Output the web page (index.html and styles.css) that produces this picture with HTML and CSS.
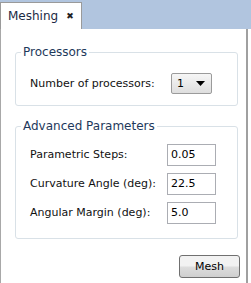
FILE: index.html
```html
<!DOCTYPE html>
<html>
<head>
	<title>Meshing</title>
	<link rel="stylesheet" href="styles.css">
</head>
<body>
	<div class="tabbar">
		<div class="tab">
			<span class="tab-title">Meshing</span>
			<span class="tab-close">&#x2716;</span>
		</div>
	</div>
	<div class="panel">
		<fieldset class="group">
			<legend>Processors</legend>
			<div class="row">
				<label>Number of processors:</label>
				<div class="combo">
					<span>1</span>
					<svg width="9" height="5" viewBox="0 0 9 5"><path d="M0 0h9L4.5 5z" fill="#000"/></svg>
				</div>
			</div>
		</fieldset>
		<fieldset class="group adv">
			<legend>Advanced Parameters</legend>
			<div class="row">
				<label>Parametric Steps:</label>
				<input class="field" type="text" value="0.05">
			</div>
			<div class="row">
				<label>Curvature Angle (deg):</label>
				<input class="field" type="text" value="22.5">
			</div>
			<div class="row">
				<label>Angular Margin (deg):</label>
				<input class="field" type="text" value="5.0">
			</div>
		</fieldset>
		<div class="actions">
			<button class="btn">Mesh</button>
		</div>
	</div>
</body>
</html>
```

FILE: styles.css
```css
body {
	margin: 0;
	background: #fff;
	font-family: "DejaVu Sans", sans-serif;
	font-size: 11px;
	color: #000;
}

.tabbar {
	display: flex;
	align-items: flex-end;
	height: 29px;
	background: #b1c5df;
}

.tab {
	display: flex;
	align-items: center;
	box-sizing: border-box;
	width: 82px;
	height: 27px;
	padding: 0 0 0 7px;
	background: #fff;
	border: 1px solid #9a9a9a;
	border-bottom: none;
	color: #1b2a44;
	font-size: 12px;
}

.tab-close {
	margin-left: 8px;
	font-size: 9px;
	font-weight: 700;
	color: #222;
}

.panel {
	box-sizing: border-box;
	width: 248px;
	height: 254px;
	border-left: 1px solid #a8a8a8;
	border-right: 2px solid #a0a0a0;
	padding: 16px 8px 0 14px;
}

.group {
	margin: 0;
	padding: 10px 0 7px 14px;
	border: 1px solid #d9e1e7;
	border-radius: 3px;
}

.group legend {
	padding: 0 2px;
	margin-left: -9px;
	font-size: 12px;
	color: #1e395b;
}

.adv {
	margin-top: 13px;
	padding-top: 7px;
	padding-bottom: 11px;
}

.row {
	display: flex;
	align-items: center;
	justify-content: space-between;
	padding-right: 21px;
	height: 29px;
}

.row label {
	color: #111;
}

.combo {
	display: flex;
	align-items: center;
	justify-content: space-between;
	box-sizing: border-box;
	width: 41px;
	height: 21px;
	padding: 0 6px 0 5px;
	margin-right: 4px;
	border: 1px solid #9b9b9b;
	border-radius: 2px;
	background: linear-gradient(#f6f6f6, #dedede);
}

.field {
	box-sizing: border-box;
	width: 49px;
	height: 22px;
	padding: 0 3px;
	border: 1px solid #abadb3;
	font: inherit;
	color: #000;
}

.actions {
	display: flex;
	justify-content: flex-end;
	margin-top: 16px;
	margin-right: -2px;
}

.btn {
	box-sizing: border-box;
	width: 61px;
	height: 23px;
	border: 1px solid #707070;
	border-radius: 3px;
	background: linear-gradient(#f2f2f2 45%, #dcdcdc 55%, #cfcfcf);
	font: inherit;
	color: #000;
}
```
